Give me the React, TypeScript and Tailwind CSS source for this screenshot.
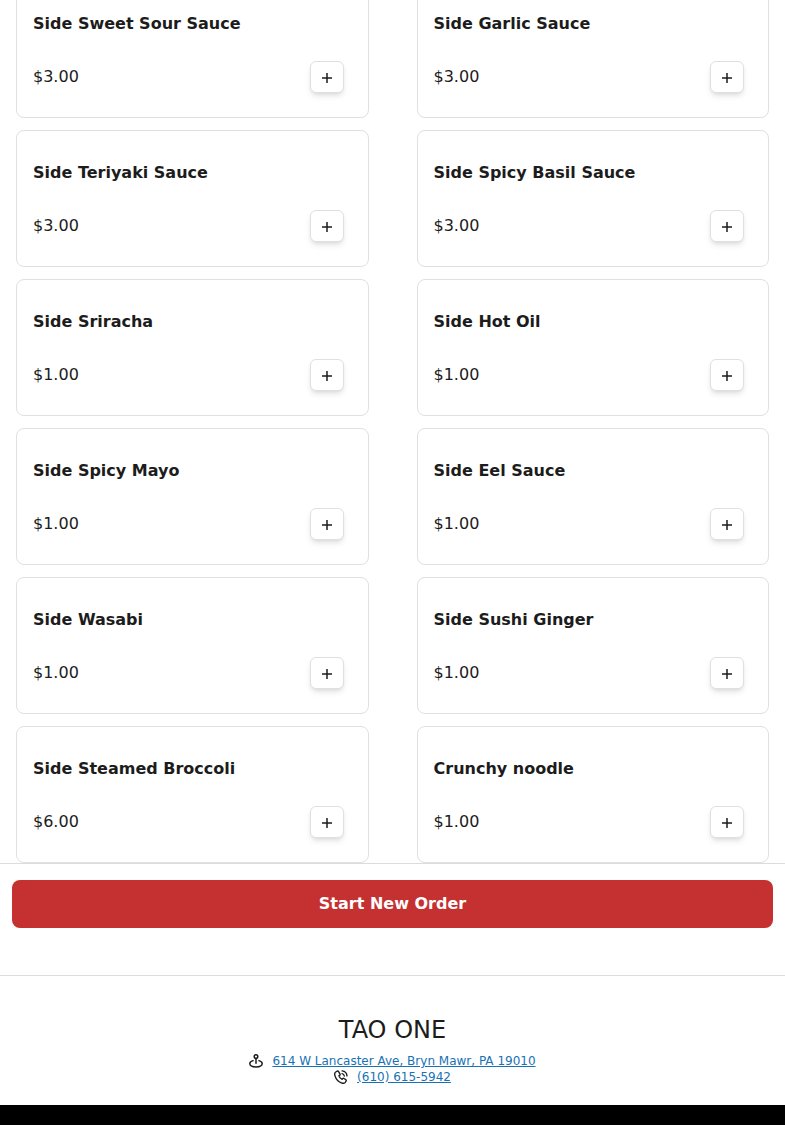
type MenuItem = { name: string; price: string };

const items: MenuItem[] = [
  { name: "Side Sweet Sour Sauce", price: "$3.00" },
  { name: "Side Garlic Sauce", price: "$3.00" },
  { name: "Side Teriyaki Sauce", price: "$3.00" },
  { name: "Side Spicy Basil Sauce", price: "$3.00" },
  { name: "Side Sriracha", price: "$1.00" },
  { name: "Side Hot Oil", price: "$1.00" },
  { name: "Side Spicy Mayo", price: "$1.00" },
  { name: "Side Eel Sauce", price: "$1.00" },
  { name: "Side Wasabi", price: "$1.00" },
  { name: "Side Sushi Ginger", price: "$1.00" },
  { name: "Side Steamed Broccoli", price: "$6.00" },
  { name: "Crunchy noodle", price: "$1.00" },
];

function PlusIcon() {
  return (
    <svg viewBox="0 0 10 10" className="h-2.5 w-2.5" fill="none" stroke="currentColor" strokeWidth="1.5" aria-hidden="true">
      <path d="M5 0v10M0 5h10" />
    </svg>
  );
}

function AddressIcon() {
  return (
    <svg viewBox="0 0 14 14" className="h-3.5 w-3.5 shrink-0" fill="none" stroke="currentColor" strokeWidth="1.5" strokeLinecap="round" aria-hidden="true">
      <circle cx="7" cy="2.6" r="1.8" />
      <path d="M7 4.6v4.6" />
      <path d="M4 6.6C2 7.2.8 8.2.8 9.5c0 2 2.7 3.4 6.2 3.4s6.2-1.4 6.2-3.4c0-1.3-1.2-2.3-3.2-2.9" />
    </svg>
  );
}

function PhoneIcon() {
  return (
    <svg viewBox="0 0 14 14" className="h-3.5 w-3.5 shrink-0" fill="none" stroke="currentColor" strokeWidth="1.4" strokeLinecap="round" strokeLinejoin="round" aria-hidden="true">
      <path d="M3.2 1.2 1.7 2C.6 2.7.5 4.3 1 5.9c1 3.2 3.4 5.9 6.3 7 1.5.6 3.2.5 4-.6l.8-1.3c.3-.5.2-.9-.3-1.3L10 8.5c-.4-.3-.9-.2-1.2.1l-.7.8c-1.4-.6-2.7-2-3.2-3.5l.9-.7c.4-.3.4-.7.2-1.1L4.6 1.6c-.3-.5-.8-.7-1.4-.4Z" />
      <path d="M8 3.6c1.3.2 2.1 1 2.3 2.4M8.1.9c2.8.3 4.6 2.1 4.9 5" />
    </svg>
  );
}

function MenuCard({ item }: { item: MenuItem }) {
  return (
    <li className="rounded-lg border border-[#e0e0e0] pt-[30px] pr-6 pb-6 pl-4">
      <h3 className="text-base leading-6 font-bold">{item.name}</h3>
      <div className="mt-[25px] flex items-center justify-between">
        <span className="text-base leading-6">{item.price}</span>
        <button
          type="button"
          aria-label={`Add ${item.name}`}
          className="flex h-8 w-[34px] items-center justify-center rounded-md border border-[#e0e0e0] bg-white pt-0.5 shadow-md"
        >
          <PlusIcon />
        </button>
      </div>
    </li>
  );
}

export default function App() {
  return (
    <div className="overflow-hidden bg-white font-['DejaVu_Sans',sans-serif] text-[#1c1c1c]">
      {/* Menu list, scrolled part of the way into its first row */}
      <main className="-mt-[19px] px-4">
        <ul className="grid grid-cols-2 gap-x-12 gap-y-3">
          {items.map((item) => (
            <MenuCard key={item.name} item={item} />
          ))}
        </ul>
      </main>

      <div className="border-t border-[#dcdcdc] px-3 pt-4 pb-[47px]">
        <button type="button" className="h-12 w-full rounded-lg bg-[#c53030] text-base font-bold text-white">
          Start New Order
        </button>
      </div>

      {/* Footer */}
      <footer className="border-t border-[#dcdcdc]">
        <div className="flex flex-col items-center pt-9 pb-5">
          <h2 className="text-2xl leading-9">TAO ONE</h2>
          <address className="mt-[5px] flex flex-col items-center text-xs leading-4 not-italic">
            <div className="flex items-center gap-[9px]">
              <AddressIcon />
              <a href="#map" className="text-[#1872b5] underline">
                614 W Lancaster Ave, Bryn Mawr, PA 19010
              </a>
            </div>
            <div className="flex items-center gap-[9px]">
              <PhoneIcon />
              <a href="tel:+16106155942" className="text-[#1872b5] underline">
                (610) 615-5942
              </a>
            </div>
          </address>
        </div>
        <div className="h-5 bg-black" />
      </footer>
    </div>
  );
}
